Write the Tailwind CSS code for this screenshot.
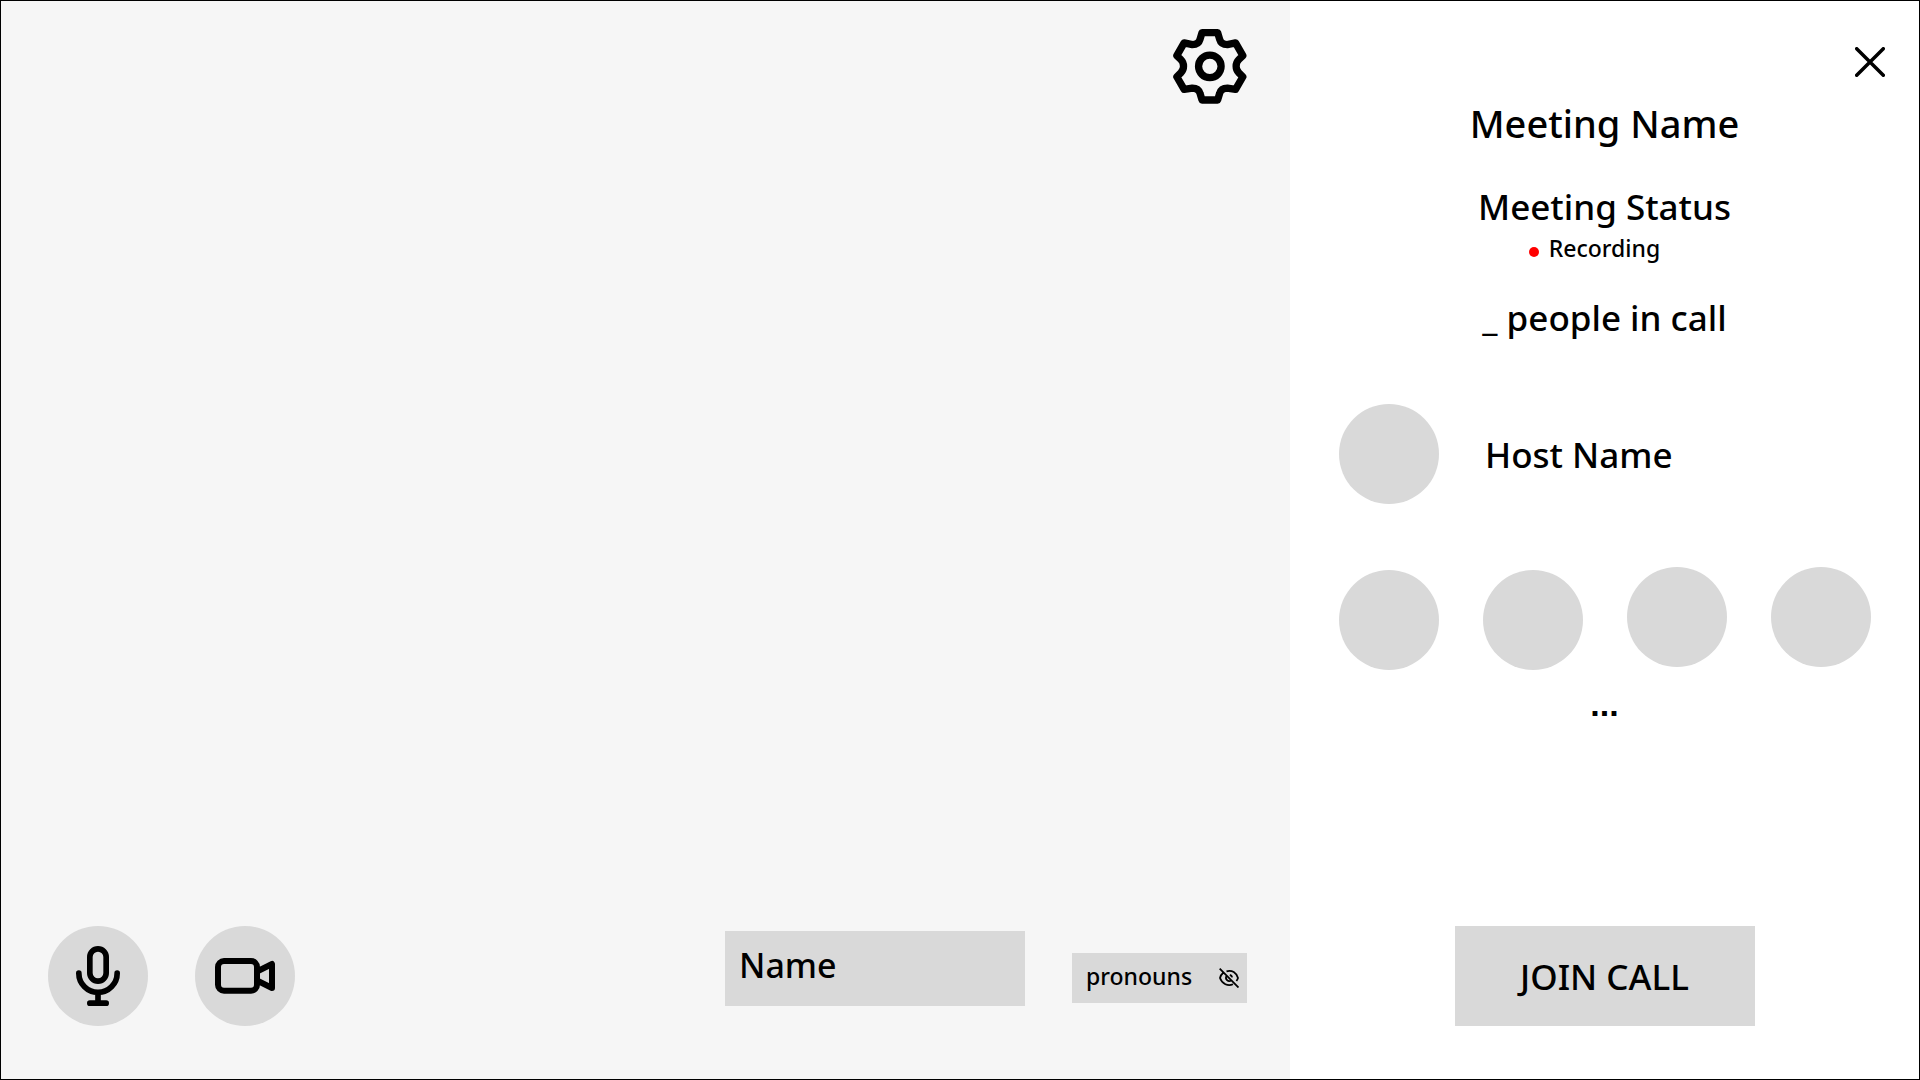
<!DOCTYPE html>
<html lang="en">
<head>
<meta charset="utf-8">
<meta name="viewport" content="width=device-width, initial-scale=1">
<title>Join call</title>
<script src="https://cdn.jsdelivr.net/npm/@tailwindcss/browser@4"></script>
</head>
<body class="flex min-h-screen border border-black bg-white font-['Noto_Sans',sans-serif] font-medium text-black">
  <!-- Camera preview -->
  <main class="flex flex-1 flex-col justify-between bg-[#f6f6f6] pt-7 pr-[43px] pb-[53px] pl-[47px]">
    <button type="button" aria-label="Settings" class="self-end">
      <svg class="size-[75px]" viewBox="66 57 225 226" fill="none" stroke="#000" stroke-width="22" stroke-linejoin="round">
        <path d="M156 68H203L209 88C212 99 220 104 232 104L257 99L279 137L267 149C256 160 256 178 267 189L279 201L257 239L232 235C220 235 212 240 209 251L203 271H156L150 251C147 240 139 235 127 235L102 239L80 201L92 189C103 178 103 160 92 149L80 137L102 99L127 104C139 104 147 99 150 88Z"/>
        <circle cx="179.500" cy="169.500" r="34"/>
      </svg>
    </button>
    <div class="flex items-center justify-between">
      <div class="flex gap-[47px]">
        <button type="button" aria-label="Microphone" class="flex size-[100px] items-center justify-center rounded-full bg-[#d9d9d9]">
          <svg class="size-[60px]" viewBox="114 138 180 180" fill="none" stroke="#000" stroke-width="17" stroke-linecap="round">
            <rect x="179.500" y="146.500" width="49" height="97" rx="24.500"/>
            <path d="M146.500 219.500a57.500 57.500 0 0 0 115 0M204 277v32M179.500 309.500h49"/>
          </svg>
        </button>
        <button type="button" aria-label="Camera" class="flex size-[100px] items-center justify-center rounded-full bg-[#d9d9d9]">
          <svg class="size-[60px]" viewBox="555 138 180 180" fill="none" stroke="#000" stroke-width="18" stroke-linejoin="round">
            <rect x="564" y="183" width="117" height="89" rx="18"/>
            <path d="M684 213L726 192V264L684 243"/>
          </svg>
        </button>
      </div>
      <div class="flex items-center gap-[47px] pb-4">
        <input type="text" aria-label="Name" placeholder="Name" class="h-[75px] w-[300px] bg-[#d9d9d9] px-[14px] pb-1.5 text-[34px] leading-10 outline-none placeholder:text-black placeholder:opacity-100">
        <div class="mt-5 flex h-[50px] w-[175px] items-center justify-between bg-[#d9d9d9] pr-2 pl-[14px]">
          <input type="text" aria-label="Pronouns" placeholder="pronouns" class="min-w-0 flex-1 pb-1 text-[23px] leading-8 outline-none placeholder:text-black placeholder:opacity-100">
          <button type="button" aria-label="Hide pronouns">
            <svg class="size-5" viewBox="0 0 20 20" fill="none" stroke="#000" stroke-width="1.800">
              <path d="M.7.700L19.500 19.500M7.500 3.300C13 1.500 17.500 5 19 10q-.6 1.800-1.600 3M4 5C2.500 6.200 1.500 8 1 10C3 16 9 18.500 14 16.300M7.800 7.800a3.200 3.200 0 0 0 4.500 4.500M10.800 7a3.200 3.200 0 0 1 2.400 2.400"/>
            </svg>
          </button>
        </div>
      </div>
    </div>
  </main>

  <!-- Meeting details -->
  <aside class="flex w-[629px] shrink-0 flex-col items-center px-12 pt-[46px] pb-[53px]">
    <button type="button" aria-label="Close" class="mr-[-14px] self-end">
      <svg class="size-[30px]" viewBox="0 0 30 30" fill="none" stroke="#000" stroke-width="3.500" stroke-linecap="round"><path d="M1.700 1.700L28.300 28.300M28.300 1.700L1.700 28.300"/></svg>
    </button>
    <h1 class="mt-[22px] text-[38px] leading-12">Meeting Name</h1>
    <h2 class="mt-10 text-[35px] leading-10">Meeting Status</h2>
    <p class="mt-[5px] flex items-center gap-2.5 pr-5 text-[23px] leading-8"><span class="mt-2 size-2.5 rounded-full bg-[#ff0000]"></span>Recording</p>
    <p class="mt-[34px] text-[35px] leading-10">_ people in call</p>
    <div class="mt-[66px] flex items-center gap-[46px] self-stretch pl-px">
      <span class="size-[100px] rounded-full bg-[#d9d9d9]"></span>
      <p class="pt-px text-[35px] leading-10">Host Name</p>
    </div>
    <ul class="mt-[63px] flex justify-between self-stretch pl-px">
      <li class="mt-[3px] size-[100px] rounded-full bg-[#d9d9d9]"></li>
      <li class="mt-[3px] size-[100px] rounded-full bg-[#d9d9d9]"></li>
      <li class="size-[100px] rounded-full bg-[#d9d9d9]"></li>
      <li class="size-[100px] rounded-full bg-[#d9d9d9]"></li>
    </ul>
    <p class="mt-3.5 font-['Liberation_Sans',sans-serif] text-[34px] leading-10 font-bold">...</p>
    <button type="button" class="mt-auto h-[100px] w-[300px] bg-[#d9d9d9] pt-0.5 text-[35px] leading-10">JOIN CALL</button>
  </aside>
</body>
</html>
